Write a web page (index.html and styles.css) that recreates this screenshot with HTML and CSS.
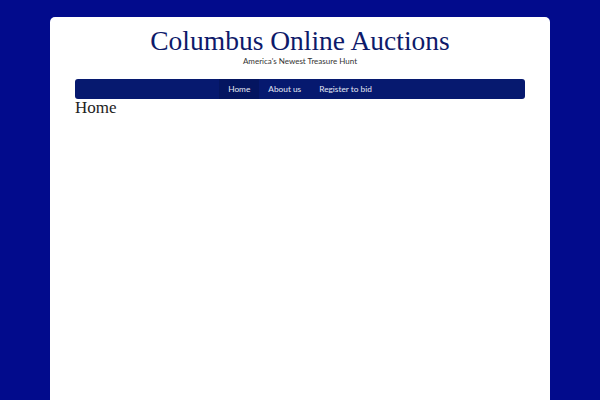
FILE: index.html
```html
<!DOCTYPE html>
<html>
<head>
<meta charset="utf-8">
<link rel="stylesheet" href="styles.css">
</head>
<body>
<div class="page">
  <header class="site-header">
    <h1 class="site-title">Columbus Online Auctions</h1>
    <p class="tagline">America's Newest Treasure Hunt</p>
  </header>
  <nav class="nav">
    <a class="nav-item active">Home</a>
    <a class="nav-item">About us</a>
    <a class="nav-item">Register to bid</a>
  </nav>
  <h2 class="page-title">Home</h2>
</div>
</body>
</html>
```
FILE: styles.css
```css
html, body {
  margin: 0;
  padding: 0;
  background: #020b8c;
  height: 100%;
}
body {
  padding-top: 17px;
  box-sizing: border-box;
  overflow: hidden;
}
.page {
  width: 450px;
  margin: 0 auto;
  background: #fff;
  border-radius: 5px 5px 0 0;
  padding: 9px 25px 0;
  height: 374px;
}
.site-header {
  text-align: center;
}
.site-title {
  margin: 0;
  font-family: "Liberation Serif", "DejaVu Serif", serif;
  font-weight: normal;
  font-size: 27.5px;
  line-height: 30px;
  color: #0e1a6a;
}
.tagline {
  margin: 0;
  font-family: Lato, "Open Sans", sans-serif;
  font-size: 8px;
  line-height: 11px;
  color: #333;
}
.nav {
  margin-top: 12px;
  height: 20px;
  background: #06196f;
  border-radius: 3px;
  display: flex;
  justify-content: center;
  align-items: stretch;
}
.nav-item {
  font-family: Lato, "Open Sans", sans-serif;
  font-size: 8.3px;
  color: #e4e8f4;
  display: flex;
  align-items: center;
  padding: 0 9px;
}
.nav-item.active {
  background: #041560;
}
.page-title {
  margin: 0;
  font-family: "Liberation Serif", "DejaVu Serif", serif;
  font-weight: normal;
  font-size: 17px;
  line-height: 17px;
  color: #222;
}
```
